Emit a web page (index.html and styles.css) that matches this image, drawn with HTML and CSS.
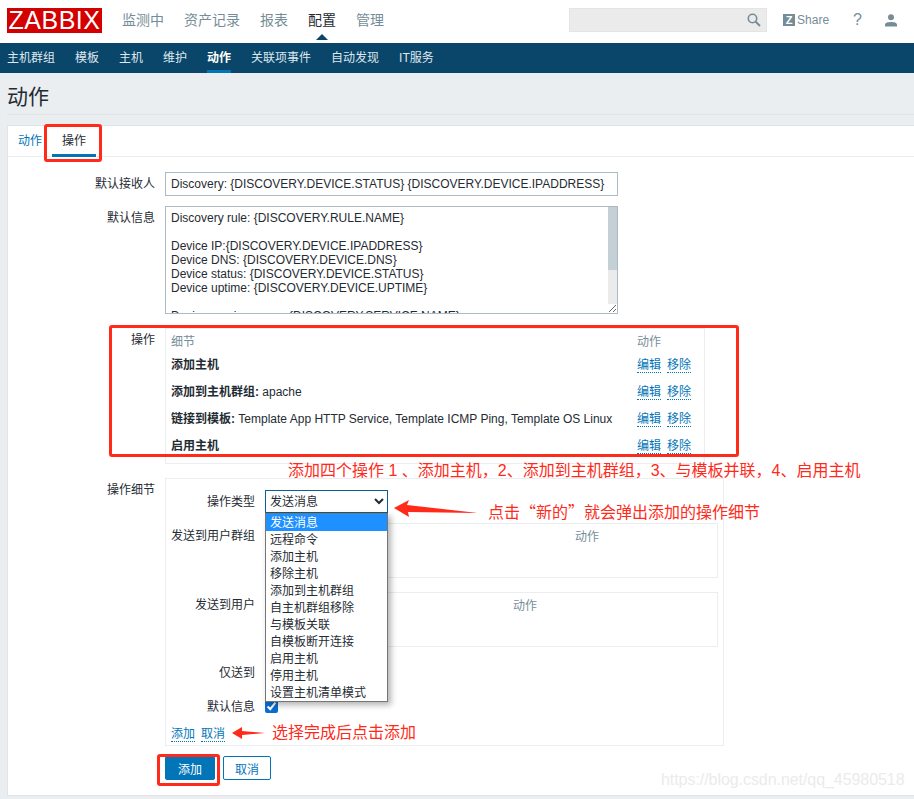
FILE: index.html
```html
<!DOCTYPE html>
<html lang="zh-CN">

<head>
    <meta charset="UTF-8">
    <meta name="viewport" content="width=device-width, initial-scale=1.0">
    <link rel="stylesheet" href="styles.css">
    <title>动作</title>
</head>

<body>
    <header class="topbar">
        <div class="logo">ZABBIX</div>
        <nav class="main-nav">
            <a>监测中</a>
            <a>资产记录</a>
            <a>报表</a>
            <a class="current">配置</a>
            <a>管理</a>
        </nav>
        <div class="search">
            <svg width="14" height="14" viewBox="0 0 14 14" fill="none" stroke="#768d99">
                <circle cx="5.5" cy="5.5" r="4.2" stroke-width="1.6" />
                <path d="M8.6 8.6 13 13" stroke-width="2" />
            </svg>
        </div>
        <a class="share"><span class="share-z">Z</span>Share</a>
        <a class="help">?</a>
        <a class="user">
            <svg width="12" height="13" viewBox="0 0 12 13" fill="#768d99">
                <circle cx="6" cy="3.2" r="3" />
                <path d="M0 12.5V10.6C0 8.8 3 8 6 8s6 .8 6 2.6v1.9z" />
            </svg>
        </a>
    </header>

    <nav class="sub-nav">
        <a>主机群组</a>
        <a>模板</a>
        <a>主机</a>
        <a>维护</a>
        <a class="current">动作</a>
        <a>关联项事件</a>
        <a>自动发现</a>
        <a>IT服务</a>
    </nav>

    <h1 class="page-title">动作</h1>

    <main class="panel">
        <div class="tabs">
            <a>动作</a>
            <a class="current">操作</a>
        </div>

        <form class="form">
            <div class="row">
                <label>默认接收人</label>
                <input class="text-input" type="text" value="Discovery: {DISCOVERY.DEVICE.STATUS} {DISCOVERY.DEVICE.IPADDRESS}">
            </div>
            <div class="row row-message">
                <label>默认信息</label>
                <div class="area-wrap">
                    <textarea class="text-area" spellcheck="false">Discovery rule: {DISCOVERY.RULE.NAME}

Device IP:{DISCOVERY.DEVICE.IPADDRESS}
Device DNS: {DISCOVERY.DEVICE.DNS}
Device status: {DISCOVERY.DEVICE.STATUS}
Device uptime: {DISCOVERY.DEVICE.UPTIME}

Device service name: {DISCOVERY.SERVICE.NAME}
Device service port: {DISCOVERY.SERVICE.PORT}
Device service status: {DISCOVERY.SERVICE.STATUS}
Device service uptime: {DISCOVERY.SERVICE.UPTIME}</textarea>
                    <div class="scroll-track"><div class="scroll-thumb"></div></div>
                </div>
            </div>
            <div class="row row-ops">
                <label>操作</label>
                <div class="ops-box">
                    <table class="ops-table">
                        <thead>
                            <tr>
                                <th>细节</th>
                                <th class="ops-action">动作</th>
                            </tr>
                        </thead>
                        <tbody>
                            <tr>
                                <td><b>添加主机</b></td>
                                <td class="ops-action"><a class="link">编辑</a><a class="link">移除</a></td>
                            </tr>
                            <tr>
                                <td><b>添加到主机群组:</b> apache</td>
                                <td class="ops-action"><a class="link">编辑</a><a class="link">移除</a></td>
                            </tr>
                            <tr>
                                <td><b>链接到模板:</b> Template App HTTP Service, Template ICMP Ping, Template OS Linux</td>
                                <td class="ops-action"><a class="link">编辑</a><a class="link">移除</a></td>
                            </tr>
                            <tr>
                                <td><b>启用主机</b></td>
                                <td class="ops-action"><a class="link">编辑</a><a class="link">移除</a></td>
                            </tr>
                        </tbody>
                    </table>
                </div>
            </div>
            <div class="row row-detail">
                <label>操作细节</label>
                <div class="detail-box">
                    <div class="detail-row detail-type">
                        <label>操作类型</label>
                        <div class="select-wrap">
                            <select class="type-select">
                                <option>发送消息</option>
                            </select>
                            <ul class="dropdown">
                                <li class="selected">发送消息</li>
                                <li>远程命令</li>
                                <li>添加主机</li>
                                <li>移除主机</li>
                                <li>添加到主机群组</li>
                                <li>自主机群组移除</li>
                                <li>与模板关联</li>
                                <li>自模板断开连接</li>
                                <li>启用主机</li>
                                <li>停用主机</li>
                                <li>设置主机清单模式</li>
                            </ul>
                        </div>
                    </div>
                    <div class="detail-row detail-groups">
                        <label>发送到用户群组</label>
                        <div class="send-box groups-box"><span>动作</span></div>
                    </div>
                    <div class="detail-row detail-users">
                        <label>发送到用户</label>
                        <div class="send-box users-box"><span>动作</span></div>
                    </div>
                    <div class="detail-row detail-only">
                        <label>仅送到</label>
                    </div>
                    <div class="detail-row detail-default">
                        <label>默认信息</label>
                        <input class="check" type="checkbox" checked>
                    </div>
                    <div class="detail-links"><a class="link">添加</a><a class="link">取消</a></div>
                </div>
            </div>
            <div class="buttons">
                <button class="btn btn-primary" type="button">添加</button>
                <button class="btn" type="button">取消</button>
            </div>
        </form>
    </main>

    <!-- red notes drawn over the screenshot -->
    <div class="mark mark-tab"></div>
    <div class="mark mark-ops"></div>
    <div class="mark mark-btn"></div>
    <div class="note note-ops">添加四个操作 1 、添加主机，2、添加到主机群组，3、与模板并联，4、启用主机</div>
    <div class="note note-new">点击“新的”就会弹出添加的操作细节</div>
    <div class="note note-add">选择完成后点击添加</div>
    <svg class="arrow arrow-new" width="86" height="20" viewBox="0 0 86 20">
        <path d="M0 8 15 0 13 5 84 13 14 12 15 17z" fill="#ff2a1a" />
    </svg>
    <svg class="arrow arrow-add" width="36" height="14" viewBox="0 0 36 14">
        <path d="M0 6 10 0 10 4 33 6 10 8 10 12z" fill="#ff2a1a" />
    </svg>
    <div class="watermark">https://blog.csdn.net/qq_45980518</div>
</body>

</html>
```

FILE: styles.css
```css
* {
    box-sizing: border-box;
    margin: 0;
    padding: 0;
}

body {
    position: relative;
    width: 914px;
    height: 799px;
    overflow: hidden;
    background-color: #ebeef0;
    color: #1f2c33;
    font-family: "Liberation Sans", "Noto Sans CJK SC", sans-serif;
    font-size: 12px;
}

/* top bar */
.topbar {
    display: flex;
    align-items: center;
    height: 43px;
    padding: 0 17px 3px 7px;
    background-color: #fff;
}

.logo {
    width: 95px;
    height: 25px;
    background-color: #d40000;
    color: #fff;
    font-size: 25px;
    letter-spacing: 0.5px;
    line-height: 25px;
    text-align: center;
}

.main-nav {
    display: flex;
    gap: 20px;
    margin-left: 20px;
    padding-bottom: 2px;
    font-size: 14px;
    color: #768d99;
}

.main-nav .current {
    position: relative;
    color: #1f2c33;
}

.main-nav .current::after {
    content: "";
    position: absolute;
    left: 8px;
    top: 25px;
    border: 6px solid transparent;
    border-top: 0;
    border-bottom-color: #0a466a;
}

.search {
    display: flex;
    align-items: center;
    justify-content: flex-end;
    width: 198px;
    height: 24px;
    margin-left: auto;
    padding-right: 5px;
    background-color: #ebebeb;
    border: 1px solid #e4e4e4;
}

.share {
    display: flex;
    align-items: center;
    margin-left: 16px;
    color: #768d99;
}

.share-z {
    width: 12px;
    height: 12px;
    margin-right: 2px;
    background-color: #768d99;
    color: #fff;
    font-size: 11px;
    font-weight: bold;
    line-height: 12px;
    text-align: center;
}

.help {
    margin-left: 24px;
    color: #768d99;
    font-size: 16px;
}

.user {
    display: flex;
    margin-left: 23px;
}

/* second level menu */
.sub-nav {
    display: flex;
    gap: 20px;
    height: 30px;
    padding-left: 7px;
    background-color: #0a466a;
    color: #dfe8ee;
    line-height: 30px;
}

.sub-nav .current {
    color: #fff;
    font-weight: bold;
    border-bottom: 3px solid #0275b8;
}

.page-title {
    height: 42px;
    margin-left: 7px;
    border-bottom: 1px solid #dfe4e7;
    font-size: 21px;
    font-weight: normal;
    line-height: 47px;
}

/* panel and tabs */
.panel {
    margin: 10px 0 0 7px;
    background-color: #fff;
    border: 1px solid #dfe4e7;
    border-right: 0;
}

.tabs {
    display: flex;
    height: 31px;
    border-bottom: 1px solid #ebeef0;
    line-height: 31px;
}

.tabs a {
    width: 44px;
    height: 31px;
    color: #0275b8;
    text-align: center;
}

.tabs .current {
    color: #1f2c33;
    border-bottom: 3px solid #0275b8;
}

.form {
    padding-top: 15px;
    padding-bottom: 15px;
}

.row {
    display: grid;
    grid-template-columns: 147px 1fr;
    column-gap: 10px;
}

.row > label,
.detail-row > label {
    text-align: right;
}

.row > label {
    line-height: 24px;
}

.text-input {
    display: block;
    width: 453px;
    height: 24px;
    padding: 0 5px;
    border: 1px solid #acbbc2;
    color: #1f2c33;
    font-family: inherit;
    font-size: 12px;
    outline: none;
}

.row-message {
    margin-top: 10px;
}

.area-wrap {
    position: relative;
    width: 453px;
}

.text-area {
    display: block;
    width: 453px;
    height: 108px;
    padding: 4px 5px;
    border: 1px solid #acbbc2;
    color: #1f2c33;
    font-family: inherit;
    font-size: 12px;
    line-height: 14px;
    overflow: hidden;
    resize: both;
    outline: none;
}

/* screenshots hide the real scrollbar, so it is drawn over the textarea */
.scroll-track {
    position: absolute;
    right: 1px;
    top: 1px;
    width: 9px;
    height: 97px;
    background-color: #ebebeb;
}

.scroll-thumb {
    height: 63px;
    background-color: #c5d0d6;
}

.row-ops {
    margin-top: 14px;
}

.ops-box {
    width: 540px;
    height: 136px;
    border: 1px solid #ebeef0;
}

.ops-table {
    width: 100%;
    border-collapse: collapse;
}

.ops-table th {
    height: 21px;
    padding: 1px 5px 0;
    color: #768d99;
    font-weight: normal;
    text-align: left;
}

.ops-table td {
    height: 27px;
    padding: 0 5px;
}

.ops-table .ops-action {
    width: 67px;
    padding-left: 0;
    white-space: nowrap;
}

.link {
    color: #0275b8;
    border-bottom: 1px dotted #0275b8;
}

.link + .link {
    margin-left: 6px;
}

/* operation details */
.row-detail {
    margin-top: 14px;
}

.detail-box {
    width: 559px;
    height: 268px;
    padding: 11px 5px 0 0;
    border: 1px solid #ebeef0;
}

.detail-row {
    display: grid;
    grid-template-columns: 89px 1fr;
    column-gap: 10px;
}

.detail-type {
    height: 23px;
}

.detail-type > label {
    line-height: 25px;
}

.select-wrap {
    position: relative;
    width: 123px;
}

.type-select {
    display: block;
    width: 123px;
    height: 23px;
    background-color: #fff;
    border: 1px solid #0a5f94;
    color: #1f2c33;
    font-family: inherit;
    font-size: 12px;
}

.dropdown {
    position: absolute;
    left: 0;
    top: 23px;
    z-index: 2;
    width: 123px;
    background-color: #fff;
    border: 1px solid #767676;
    box-shadow: 3px 3px 6px rgba(0, 0, 0, 0.3);
    list-style: none;
}

.dropdown li {
    height: 17px;
    padding-left: 4px;
    line-height: 18px;
}

.dropdown .selected {
    background-color: #1e90ff;
    color: #fff;
}

.detail-groups {
    margin-top: 10px;
}

.detail-users {
    margin-top: 14px;
}

.detail-groups > label,
.detail-users > label {
    line-height: 26px;
}

.send-box {
    width: 453px;
    height: 55px;
    padding: 5px;
    border: 1px solid #ebeef0;
    color: #768d99;
    line-height: 16px;
}

.groups-box {
    padding-left: 309px;
}

.users-box {
    padding-left: 247px;
}

.detail-only {
    height: 16px;
    margin-top: 17px;
    line-height: 18px;
}

.detail-default {
    align-items: center;
    height: 16px;
    margin-top: 18px;
    line-height: 18px;
}

.check {
    width: 13px;
    height: 13px;
    margin-top: -2px;
    accent-color: #0a6ed1;
}

.detail-links {
    margin-top: 12px;
    padding-left: 5px;
    line-height: 16px;
}

.buttons {
    display: flex;
    gap: 8px;
    margin: 10px 0 0 157px;
}

.btn {
    width: 48px;
    height: 24px;
    background-color: #fff;
    border: 1px solid #0275b8;
    border-radius: 2px;
    color: #0275b8;
    font-family: inherit;
    font-size: 12px;
}

.btn-primary {
    width: 50px;
    background-color: #0275b8;
    color: #fff;
}

/* annotations on top of the page */
.mark {
    position: absolute;
    z-index: 3;
    border: 3px solid #ff2a1a;
    border-radius: 3px;
}

.mark-tab {
    left: 44px;
    top: 124px;
    width: 58px;
    height: 38px;
}

.mark-ops {
    left: 109px;
    top: 325px;
    width: 630px;
    height: 132px;
}

.mark-btn {
    left: 157px;
    top: 754px;
    width: 63px;
    height: 32px;
}

.note {
    position: absolute;
    z-index: 3;
    color: #ff2a1a;
    font-size: 16px;
    line-height: 20px;
    white-space: nowrap;
}

.note-ops {
    left: 288px;
    top: 461px;
}

.note-new {
    left: 488px;
    top: 501px;
    font-family: "Noto Sans CJK SC", sans-serif;
}

.note-add {
    left: 272px;
    top: 723px;
}

.arrow {
    position: absolute;
    z-index: 3;
}

.arrow-new {
    left: 394px;
    top: 500px;
}

.arrow-add {
    left: 232px;
    top: 727px;
}

.watermark {
    position: absolute;
    z-index: 3;
    left: 661px;
    top: 770px;
    color: #ebebeb;
    font-size: 16px;
    letter-spacing: -0.06px;
    line-height: 20px;
}
```
